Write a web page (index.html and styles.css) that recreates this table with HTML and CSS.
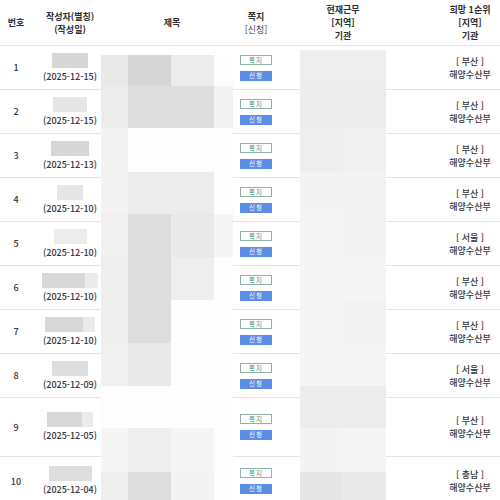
FILE: index.html
```html
<!DOCTYPE html>
<html lang="ko">
<head>
<meta charset="utf-8">
<title>게시판</title>
<link rel="stylesheet" href="styles.css">
</head>
<body>
<div class="board">
  <table class="list">
    <colgroup>
      <col class="c-no"><col class="c-writer"><col class="c-title"><col class="c-msg"><col class="c-now"><col class="c-hope">
    </colgroup>
    <thead>
      <tr>
        <th>번호</th>
        <th>작성자(별칭)<br>(작성일)</th>
        <th>제목</th>
        <th>쪽지<br><span class="sub">[신청]</span></th>
        <th>현재근무<br>[지역]<br>기관</th>
        <th>희망 1순위<br>[지역]<br>기관</th>
      </tr>
    </thead>
    <tbody>
      <tr>
        <td>1</td>
        <td><span class="nick w36 k-d6"></span><span class="date">(2025-12-15)</span></td>
        <td></td>
        <td><span class="tag note">쪽지</span><span class="tag apply">신청</span></td>
        <td></td>
        <td class="hope">[ 부산 ]<br>해양수산부</td>
      </tr>
      <tr>
        <td>2</td>
        <td><span class="nick w34 k-e6"></span><span class="date">(2025-12-15)</span></td>
        <td></td>
        <td><span class="tag note">쪽지</span><span class="tag apply">신청</span></td>
        <td></td>
        <td class="hope">[ 부산 ]<br>해양수산부</td>
      </tr>
      <tr>
        <td>3</td>
        <td><span class="nick w38 k-d6"></span><span class="date">(2025-12-13)</span></td>
        <td></td>
        <td><span class="tag note">쪽지</span><span class="tag apply">신청</span></td>
        <td></td>
        <td class="hope">[ 부산 ]<br>해양수산부</td>
      </tr>
      <tr>
        <td>4</td>
        <td><span class="nick w26 k-e6"></span><span class="date">(2025-12-10)</span></td>
        <td></td>
        <td><span class="tag note">쪽지</span><span class="tag apply">신청</span></td>
        <td></td>
        <td class="hope">[ 부산 ]<br>해양수산부</td>
      </tr>
      <tr>
        <td>5</td>
        <td><span class="nick w33 k-ec"></span><span class="date">(2025-12-10)</span></td>
        <td></td>
        <td><span class="tag note">쪽지</span><span class="tag apply">신청</span></td>
        <td></td>
        <td class="hope">[ 서울 ]<br>해양수산부</td>
      </tr>
      <tr>
        <td>6</td>
        <td><span class="nick w56 two"></span><span class="date">(2025-12-10)</span></td>
        <td></td>
        <td><span class="tag note">쪽지</span><span class="tag apply">신청</span></td>
        <td></td>
        <td class="hope">[ 부산 ]<br>해양수산부</td>
      </tr>
      <tr>
        <td>7</td>
        <td><span class="nick w50 two"></span><span class="date">(2025-12-10)</span></td>
        <td></td>
        <td><span class="tag note">쪽지</span><span class="tag apply">신청</span></td>
        <td></td>
        <td class="hope">[ 부산 ]<br>해양수산부</td>
      </tr>
      <tr>
        <td>8</td>
        <td><span class="nick w36 k-dd"></span><span class="date">(2025-12-09)</span></td>
        <td></td>
        <td><span class="tag note">쪽지</span><span class="tag apply">신청</span></td>
        <td></td>
        <td class="hope">[ 서울 ]<br>해양수산부</td>
      </tr>
      <tr class="tall">
        <td>9</td>
        <td><span class="nick w46 two"></span><span class="date">(2025-12-05)</span></td>
        <td></td>
        <td><span class="tag note">쪽지</span><span class="tag apply">신청</span></td>
        <td></td>
        <td class="hope">[ 부산 ]<br>해양수산부</td>
      </tr>
      <tr class="last">
        <td>10</td>
        <td><span class="nick w43 k-dd"></span><span class="date">(2025-12-04)</span></td>
        <td></td>
        <td><span class="tag note">쪽지</span><span class="tag apply">신청</span></td>
        <td></td>
        <td class="hope">[ 충남 ]<br>해양수산부</td>
      </tr>
    </tbody>
  </table>

  <div class="mosaic mosaic-title" aria-hidden="true">
    <i class="k-e9"></i><i class="k-d6"></i><i class="k-ec"></i><i class="k-fd"></i>
    <i class="k-ec"></i><i class="k-dd"></i><i class="k-dd"></i><i class="k-f3"></i>
    <i class="k-f3"></i><i class="k-fd"></i><i class="k-fd"></i><i class="k-fd"></i>
    <i class="k-f3"></i><i class="k-ec"></i><i class="k-ec"></i><i class="k-fd"></i>
    <i class="k-f0"></i><i class="k-dd"></i><i class="k-e9"></i><i class="k-f5"></i>
    <i class="k-ee"></i><i class="k-dd"></i><i class="k-ee"></i><i class="k-fd"></i>
    <i class="k-ee"></i><i class="k-dd"></i><i class="k-fd"></i><i class="k-fd"></i>
    <i class="k-f0"></i><i class="k-e9"></i><i class="k-fd"></i><i class="k-fd"></i>
    <i class="k-fd"></i><i class="k-fd"></i><i class="k-fd"></i><i class="k-fd"></i>
    <i class="k-f5"></i><i class="k-ee"></i><i class="k-f5"></i><i class="k-fd"></i>
    <i class="k-ee"></i><i class="k-dd"></i><i class="k-f3"></i><i class="k-fd"></i>
  </div>

  <div class="mosaic mosaic-now" aria-hidden="true">
    <i class="k-ee"></i><i class="k-ee"></i>
    <i class="k-ec"></i><i class="k-ec"></i>
    <i class="k-ee"></i><i class="k-f0"></i>
    <i class="k-f3"></i><i class="k-f3"></i>
    <i class="k-f5"></i><i class="k-f3"></i>
    <i class="k-f5"></i><i class="k-f5"></i>
    <i class="k-f5"></i><i class="k-f3"></i>
    <i class="k-f5"></i><i class="k-f5"></i>
    <i class="k-ec"></i><i class="k-ec"></i>
    <i class="k-f3"></i><i class="k-f5"></i>
    <i class="k-e6"></i><i class="k-e9"></i>
  </div>
</div>
</body>
</html>
```

FILE: styles.css
```css
html, body {
  margin: 0;
  padding: 0;
  background: #ffffff;
  overflow: hidden;
}

.board {
  position: relative;
  width: 500px;
  height: 500px;
  overflow: hidden;
  font-family: "Noto Sans CJK KR", "Noto Sans", sans-serif;
  font-size: 9px;
  color: #333333;
}

.list {
  width: 530px;
  border-collapse: collapse;
  table-layout: fixed;
}

.c-no { width: 32px; }
.c-writer { width: 76px; }
.c-title { width: 128px; }
.c-msg { width: 40px; }
.c-now { width: 134px; }
.c-hope { width: 120px; }

.list th,
.list td {
  padding: 0;
  text-align: center;
  vertical-align: middle;
  border-bottom: 1px solid #e3e3e3;
}

.list th {
  height: 45px;
  font-weight: 700;
  line-height: 13px;
  color: #2e2e2e;
}

.list th .sub {
  font-weight: 400;
  color: #444444;
}

.list td {
  height: 43px;
  line-height: 13px;
  font-weight: 500;
}

.list tr.tall td { height: 58px; }
.list tr.last td { height: 48px; }

.nick {
  display: block;
  height: 15px;
  margin: 0 auto 2px;
}

.w26 { width: 26px; }
.w33 { width: 33px; }
.w34 { width: 34px; }
.w36 { width: 36px; }
.w38 { width: 38px; }
.w43 { width: 43px; }
.w46 { width: 46px; }
.w50 { width: 50px; }
.w56 { width: 56px; }

.nick.two {
  background: linear-gradient(to right, #d8d8d8 0 76%, #ebebeb 76% 100%);
}

.date {
  display: block;
  font-weight: 500;
}

.tag {
  display: block;
  box-sizing: border-box;
  width: 32px;
  height: 10px;
  margin: 0 auto;
  font-size: 6.5px;
  line-height: 9px;
  letter-spacing: 1px;
  font-weight: 400;
}

.tag.note {
  border: 1px solid #8fb2ab;
  color: #3f8f82;
  line-height: 8px;
}

.tag.apply {
  margin-top: 6px;
  background: #5b8de6;
  color: #ffffff;
}

.hope {
  line-height: 15px;
  font-weight: 700;
  color: #333333;
}

.mosaic {
  position: absolute;
  display: grid;
  grid-template-rows: 31px 42px 44px 42px 43px 43px 43px 43px 42px 44px 28px;
}

.mosaic i { display: block; }

.mosaic-title {
  left: 101px;
  top: 55px;
  width: 132px;
  grid-template-columns: 27px 43px 43px 19px;
}

.mosaic-now {
  left: 300px;
  top: 50px;
  width: 86px;
  grid-template-columns: 42px 44px;
  grid-template-rows: 36px 42px 44px 42px 43px 43px 43px 43px 42px 44px 28px;
}

.k-d6 { background: #d6d6d6; }
.k-dd { background: #dddddd; }
.k-e6 { background: #e6e6e6; }
.k-e9 { background: #e9e9e9; }
.k-ec { background: #ececec; }
.k-ee { background: #eeeeee; }
.k-f0 { background: #f0f0f0; }
.k-f3 { background: #f3f3f3; }
.k-f5 { background: #f5f5f5; }
.k-fd { background: #fdfdfd; }
```
